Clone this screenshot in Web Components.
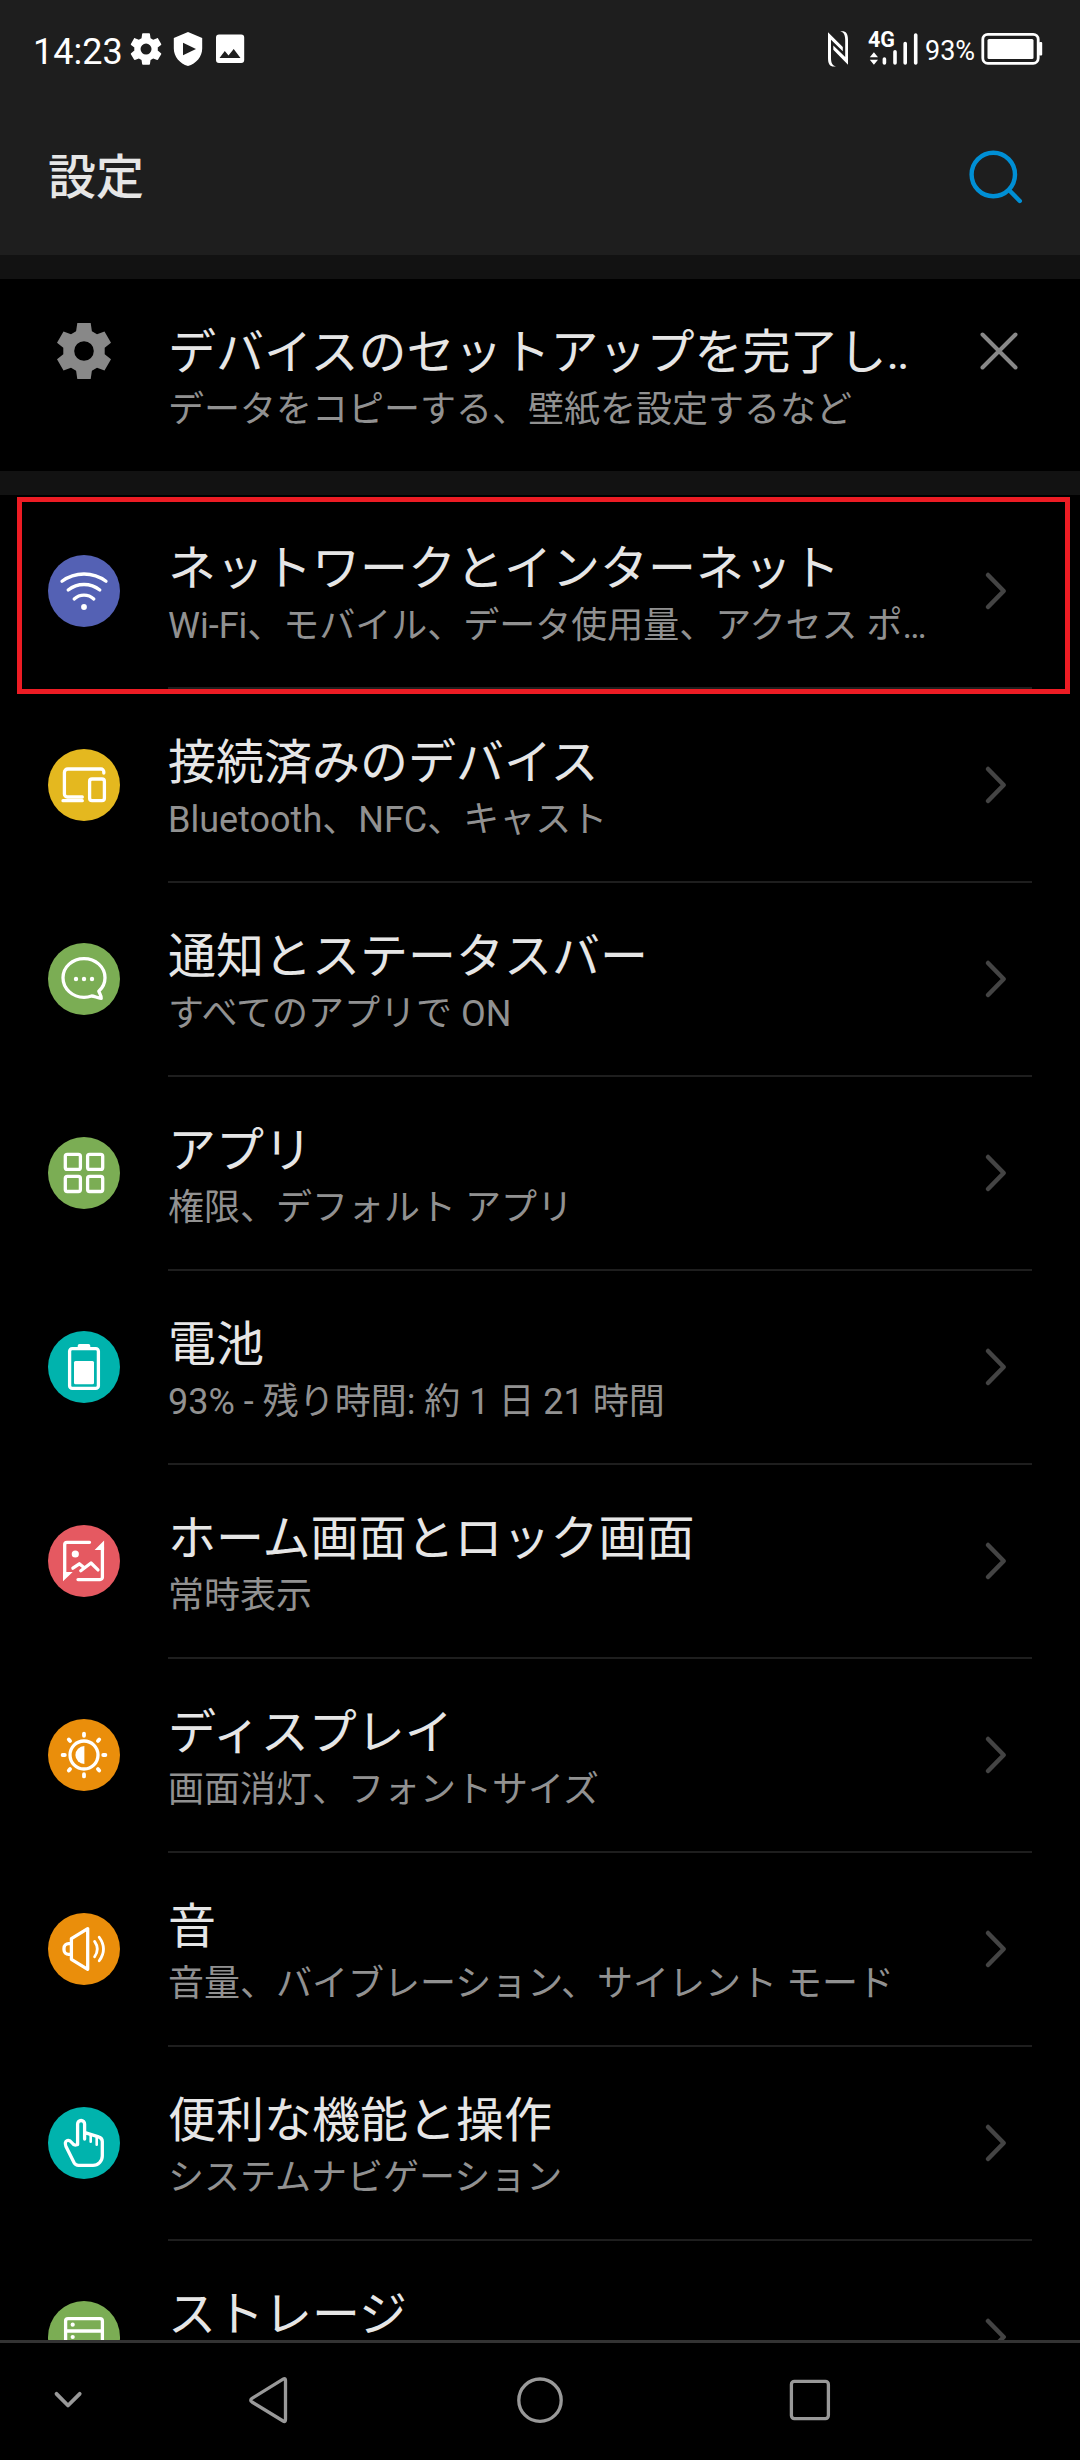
<!DOCTYPE html>
<html lang="ja">
<head>
<meta charset="utf-8">
<title>設定</title>
<style>
  body {
    margin: 0;
    background: #000;
    font-family: Roboto, "Noto Sans CJK JP", sans-serif;
  }
</style>
</head>
<body>
<settings-app>
  <status-bar slot="top" time="14:23" battery="93%"></status-bar>
  <app-header slot="top">設定</app-header>

  <setup-card slot="card">
    デバイスのセットアップを完了し<span class="dots">..</span>
    <span slot="summary">データをコピーする、壁紙を設定するなど</span>
  </setup-card>

  <settings-item icon="wifi" color="#5461b4" highlighted>
    ネットワークとインターネット
    <span slot="summary">Wi-Fi、モバイル、データ使用量、アクセス ポ…</span>
  </settings-item>
  <settings-item icon="devices" color="#e4b81f">
    接続済みのデバイス
    <span slot="summary">Bluetooth、NFC、キャスト</span>
  </settings-item>
  <settings-item icon="chat" color="#7bad54">
    通知とステータスバー
    <span slot="summary">すべてのアプリで ON</span>
  </settings-item>
  <settings-item icon="apps" color="#7bad54">
    アプリ
    <span slot="summary">権限、デフォルト アプリ</span>
  </settings-item>
  <settings-item icon="battery" color="#00b3ad">
    電池
    <span slot="summary">93% - 残り時間: 約 1 日 21 時間</span>
  </settings-item>
  <settings-item icon="wallpaper" color="#e55961">
    ホーム画面とロック画面
    <span slot="summary">常時表示</span>
  </settings-item>
  <settings-item icon="display" color="#ea8e0b">
    ディスプレイ
    <span slot="summary">画面消灯、フォントサイズ</span>
  </settings-item>
  <settings-item icon="sound" color="#ea8e0b">
    音
    <span slot="summary">音量、バイブレーション、サイレント モード</span>
  </settings-item>
  <settings-item icon="touch" color="#00b3ad">
    便利な機能と操作
    <span slot="summary">システムナビゲーション</span>
  </settings-item>
  <settings-item icon="storage" color="#7bad54">ストレージ</settings-item>

  <nav-bar slot="bottom"></nav-bar>
</settings-app>

<script>
/*
 * Icons for the list items, drawn on a 72x72 disc.
 */
const icons = {
  wifi: `
    <path d="M14 26.3a36.8 36.8 0 0 1 44 0M20.2 35a25.4 25.4 0 0 1 31.6 0M26.2 44a14.5 14.5 0 0 1 19.6 0"/>
    <circle class="solid" cx="36" cy="52" r="2.9"/>`,
  devices: `
    <path d="M55.8 24v-1.2a2.8 2.8 0 0 0-2.8-2.8H19.8a3.4 3.4 0 0 0-3.4 3.4V45a3 3 0 0 0 3 3H34.3M15 51.7H34.3"/>
    <rect x="41.6" y="30" width="14.8" height="21.7" rx="2.4"/>`,
  chat: `
    <path d="M50.8 48.3C54.7 44.800 57 40 57 34.800C57 24 47.600 15.600 36 15.600S15 24 15 34.800S24.400 54.300 36 54.300C38.700 54.300 41.300 53.800 43.600 53C46.500 53.200 49.500 55 53.200 55.300C53.300 52.500 51.800 50.700 50.800 48.300Z"/>
    <circle class="solid" cx="28" cy="36" r="2.2"/>
    <circle class="solid" cx="36" cy="36" r="2.2"/>
    <circle class="solid" cx="44" cy="36" r="2.2"/>`,
  apps: `
    <rect x="17.3" y="17.3" width="15.1" height="15.1" rx="2"/>
    <rect x="39.6" y="17.3" width="15.1" height="15.1" rx="2"/>
    <rect x="17.3" y="39.4" width="15.1" height="15.1" rx="2"/>
    <rect x="39.6" y="39.4" width="15.1" height="15.1" rx="2"/>`,
  battery: `
    <rect x="21.6" y="17.6" width="28.8" height="39.8" rx="2.6"/>
    <path class="solid" d="M29.7 17v-2.2a1.8 1.8 0 0 1 1.8-1.8h9a1.8 1.8 0 0 1 1.8 1.8V17z"/>
    <rect class="solid" x="26" y="30" width="20" height="23.3" rx="1.5"/>`,
  wallpaper: `
    <path d="M41.5 17.3H19a2.3 2.3 0 0 0-2.3 2.3V50M54.4 22V52.3a2.3 2.3 0 0 1-2.3 2.3H30"/>
    <path d="M24.9 43.2l6.4-4.4 4.3 3.4M32.8 45.7l10.2-7.7 7 6.9"/>
    <path class="solid" d="M15 56.2V47h9.7zM56.1 15.6V25h-9.5z"/>
    <circle class="solid" cx="27.3" cy="29" r="3.6"/>`,
  display: `
    <circle cx="36" cy="36" r="14"/>
    <path class="solid" d="M36.4 27v18a9 9 0 0 1 0-18z"/>
    <path style="stroke-width: 3.8" d="M36 14.6v2.2M36 55.2v2.2M14.6 36h2.2M55.2 36h2.2M20.8 20.4l1.3 1.5M51.2 20.4l-1.3 1.5M20.8 51.6l1.3-1.5M51.2 51.6l-1.3-1.5"/>`,
  sound: `
    <path d="M39.7 15.7V56.3L23.4 46.3V25.7z"/>
    <path d="M23 30.6h-2.4a4.6 4.6 0 0 0-4.6 4.6v1.6a4.6 4.6 0 0 0 4.6 4.6H23"/>
    <path style="stroke-width: 2.8" d="M46.6 28.4q5.4 7.6 0 15.4M51.2 24.2q8.6 11.8 0 23.6"/>`,
  touch: `
    <path d="M29.6 37.5V17a3.5 3.5 0 0 1 7 0V32M37 25.7l13.6 4.1a5 5 0 0 1 3.7 4.8V49a9.3 9.3 0 0 1-9.3 9.3H30.5a5 5 0 0 1-4.4-2.6L18 39.5C16.8 36.6 17.2 34.2 19.3 33.5C21 32.9 22.5 33.8 23.8 35.6C25.3 37.8 26.5 38.7 28.6 37.8"/>
    <path style="stroke-width: 2.6" d="M42.7 28.5v6.3M48.7 30.5v7.3"/>`,
  storage: `
    <rect x="17.6" y="17.6" width="36.8" height="37" rx="2.4"/>
    <path d="M18 30h36M18 42.5h36"/>
    <circle class="solid" cx="24.7" cy="23.7" r="2.1"/>
    <circle class="solid" cx="24.7" cy="36" r="2.1"/>
    <circle class="solid" cx="24.7" cy="48.5" r="2.1"/>`
}

/*
 * Title and summary are set the same way in the card and in the list items.
 */
const textStyle = `
  .text {
    flex: 1;
    min-width: 0;
    padding-top: 46px;
    white-space: nowrap;
  }
  .title {
    height: 61px;
    font-size: 48px;
    line-height: 56px;
    color: #e6e6e6;
  }
  .summary {
    font-size: 36px;
    line-height: 48px;
    color: #919191;
  }
  ::slotted(.dots) {
    letter-spacing: -2.3px;
  }
`

/**
 * Attaches an open shadow root with the given markup.
 *
 * @param {HTMLElement} element - The host.
 * @param {string} html - Content of the shadow root.
 */
function render (element, html) {
  const template = document.createElement('template')
  template.innerHTML = html
  element.attachShadow({ mode: 'open' }).append(template.content.cloneNode(true))
}

customElements.define('settings-app',
  /**
   * Represents the whole screen.
   */
  class extends HTMLElement {
    constructor () {
      super()
      render(this, `
        <style>
          :host {
            display: flex;
            flex-direction: column;
            width: 1080px;
            height: 2460px;
            overflow: hidden;
            background: #000;
          }
          header {
            flex: none;
            height: 255px;
            background: #1e1e1e;
          }
          .card {
            flex: none;
            border: solid #121212;
            border-width: 24px 0;
          }
          main {
            flex: 1;
            min-height: 0;
            overflow: hidden;
          }
        </style>
        <header><slot name="top"></slot></header>
        <div class="card"><slot name="card"></slot></div>
        <main><slot></slot></main>
        <slot name="bottom"></slot>
      `)
    }
  }
)

customElements.define('status-bar',
  /**
   * Represents the status bar with clock, notifications and signal.
   */
  class extends HTMLElement {
    constructor () {
      super()
      render(this, `
        <style>
          :host {
            display: flex;
            justify-content: space-between;
            box-sizing: border-box;
            height: 98px;
            padding: 0 37px 0 33px;
            color: #fff;
          }
          div {
            display: flex;
            align-items: center;
          }
          svg {
            display: block;
            fill: currentColor;
          }
          #time {
            width: 95px;
            padding-top: 5px;
            font-size: 36px;
            line-height: 42px;
          }
          #battery {
            width: 56px;
            padding-top: 4px;
            font-size: 27px;
            line-height: 32px;
          }
        </style>
        <div>
          <span id="time"></span>
          <svg width="120" height="40" viewBox="128 29 120 40">
            <path fill-rule="evenodd" transform="translate(127.2 30.2) scale(1.57)" d="M19.43 12.98c.04-.32.07-.64.07-.98s-.03-.66-.07-.98l2.11-1.65c.19-.15.24-.42.12-.64l-2-3.46c-.12-.22-.39-.3-.61-.22l-2.49 1c-.52-.4-1.08-.73-1.69-.98l-.38-2.65C14.46 2.18 14.25 2 14 2h-4c-.25 0-.46.18-.49.42l-.38 2.65c-.61.25-1.17.59-1.69.98l-2.49-1c-.23-.09-.49 0-.61.22l-2 3.46c-.13.22-.07.49.12.64l2.11 1.65c-.04.32-.07.65-.07.98s.03.66.07.98l-2.11 1.65c-.19.15-.24.42-.12.64l2 3.46c.12.22.39.3.61.22l2.49-1c.52.4 1.08.73 1.69.98l.38 2.65c.03.24.24.42.49.42h4c.25 0 .46-.18.49-.42l.38-2.65c.61-.25 1.17-.59 1.69-.98l2.49 1c.23.09.49 0 .61-.22l2-3.46c.12-.22.07-.49-.12-.64zM12 15.5a3.5 3.5 0 1 1 0-7 3.5 3.5 0 0 1 0 7z"/>
            <path fill-rule="evenodd" d="M188 32l14.2 6v10.5c0 8-6 15.2-14.2 17.5-8.2-2.3-14.2-9.5-14.2-17.5V38zM183 42.7V55.3L196 49z"/>
            <path fill-rule="evenodd" d="M219 34.5h22.200a3 3 0 0 1 3 3V60a3 3 0 0 1-3 3H219a3 3 0 0 1-3-3V37.5a3 3 0 0 1 3-3zM219.5 58H240.5L233.7 49l-5.2 6.6-3.7-4.5z"/>
          </svg>
        </div>
        <div>
          <svg width="98" height="56" viewBox="827 21 98 56">
            <path d="M828 32.3L842.8 47V51.3L831 39.8V58C831 63 832.5 65.8 836 66.4C830.5 67.3 828 65 828 58zM848 64.8L833.3 49.8V45.6L845.2 57V40C845.2 35 843.7 32 840.2 31.5C845.5 30.7 848 33 848 40z"/>
            <text x="868" y="47.3" font-size="21.5" font-weight="700">4G</text>
            <path d="M873.9 52.2l4.1 5h-8.2zM873.9 64.8l4.1-5h-8.2z"/>
            <path fill="none" stroke="currentColor" stroke-width="3.6" stroke-linecap="round" d="M884.4 59v4M895 51.7V63M905.2 43.5V63M915.7 35V63"/>
          </svg>
          <span id="battery"></span>
          <svg width="62" height="40" viewBox="981 29 62 40">
            <rect x="982.8" y="34.3" width="55.4" height="29" rx="5" fill="none" stroke="currentColor" stroke-width="2.8"/>
            <rect x="987.5" y="39" width="46" height="20" rx="1.5"/>
            <rect x="1039" y="42" width="3.2" height="13.5" rx="1"/>
          </svg>
        </div>
      `)
      this.shadowRoot.querySelector('#time').textContent = this.getAttribute('time')
      this.shadowRoot.querySelector('#battery').textContent = this.getAttribute('battery')
    }
  }
)

customElements.define('app-header',
  /**
   * Represents the title row with the search button.
   */
  class extends HTMLElement {
    constructor () {
      super()
      render(this, `
        <style>
          :host {
            display: flex;
            align-items: center;
            justify-content: space-between;
            box-sizing: border-box;
            height: 157px;
            padding: 0 54px 0 48px;
          }
          h1 {
            margin: 0;
            padding-top: 2px;
            font-size: 48px;
            font-weight: 500;
            line-height: 60px;
            color: #e6e6e6;
          }
          svg {
            display: block;
          }
        </style>
        <h1><slot></slot></h1>
        <svg width="60" height="60" viewBox="0 0 60 60" fill="none" stroke="#008fd5" stroke-width="4.4" stroke-linecap="round">
          <circle cx="27.3" cy="27.5" r="21.7"/>
          <path d="M43.5 43.5L53.8 54"/>
        </svg>
      `)
    }
  }
)

customElements.define('setup-card',
  /**
   * Represents the dismissible card above the list.
   */
  class extends HTMLElement {
    constructor () {
      super()
      render(this, `
        <style>
          ${textStyle}
          :host {
            display: flex;
            box-sizing: border-box;
            height: 192px;
            padding: 0 57px 0 48px;
          }
          svg {
            flex: none;
            margin-top: 36px;
          }
          .gear {
            margin-right: 48px;
          }
        </style>
        <svg class="gear" width="72" height="72" viewBox="-36 -36 72 72" fill="#888">
          <path fill-rule="evenodd" d="M-6.7-28H6.7L7.9-19.7 13-16.8 20.5-19.6 27-8.3 20.7-3.3V3.3L27 8.3 20.5 19.6 13 16.8 7.9 19.7 6.7 28H-6.7L-7.9 19.7-13 16.8-20.5 19.6-27 8.3-20.7 3.3V-3.3L-27-8.3-20.5-19.6-13-16.8-7.9-19.7zM0-9.8a9.8 9.8 0 1 0 0 19.6a9.8 9.8 0 1 0 0-19.6z"/>
        </svg>
        <div class="text">
          <div class="title"><slot></slot></div>
          <div class="summary"><slot name="summary"></slot></div>
        </div>
        <svg width="48" height="72" viewBox="-24 -36 48 72" stroke="#888" stroke-width="4" stroke-linecap="round">
          <path d="M-16.5-16.5L16.5 16.5M16.5-16.5L-16.5 16.5"/>
        </svg>
      `)
    }
  }
)

customElements.define('settings-item',
  /**
   * Represents one entry of the settings list.
   */
  class extends HTMLElement {
    constructor () {
      super()
      render(this, `
        <style>
          ${textStyle}
          :host {
            display: flex;
            position: relative;
            height: 194px;
            padding: 0 48px;
          }
          .icon {
            flex: none;
            width: 72px;
            height: 72px;
            margin: 60px 48px 0 0;
            border-radius: 50%;
            fill: none;
            stroke: #fff;
            stroke-width: 3.3;
            stroke-linecap: round;
            stroke-linejoin: round;
          }
          .icon .solid {
            fill: #fff;
            stroke: none;
          }
          .body {
            flex: 1;
            min-width: 0;
            display: flex;
            box-sizing: border-box;
            border-bottom: 2px solid #1e1e1e;
          }
          .chevron {
            flex: none;
            margin: 72px 22px 0 0;
          }
          :host([highlighted])::after {
            content: "";
            position: absolute;
            left: 17px;
            right: 10px;
            top: 2px;
            height: 187px;
            border: 5px solid #ed1c24;
          }
        </style>
        <svg class="icon" viewBox="0 0 72 72">${icons[this.getAttribute('icon')]}</svg>
        <div class="body">
          <div class="text">
            <div class="title"><slot></slot></div>
            <div class="summary"><slot name="summary"></slot></div>
          </div>
          <svg class="chevron" width="28" height="48" viewBox="0 0 28 48" fill="none" stroke="#444" stroke-width="4.5" stroke-linecap="round" stroke-linejoin="round">
            <path d="M6 8L21.7 24 6 40"/>
          </svg>
        </div>
      `)
      this.shadowRoot.querySelector('.icon').style.background = this.getAttribute('color')
    }
  }
)

customElements.define('nav-bar',
  /**
   * Represents the system navigation buttons.
   */
  class extends HTMLElement {
    constructor () {
      super()
      render(this, `
        <style>
          :host {
            flex: none;
            display: grid;
            grid-template-columns: 135px 270px 270px 270px;
            place-items: center;
            box-sizing: border-box;
            height: 120px;
            border-top: 3px solid #333;
            padding-bottom: 1px;
          }
          svg {
            width: 60px;
            height: 60px;
            fill: none;
            stroke: #999;
            stroke-width: 3.3;
            stroke-linecap: round;
            stroke-linejoin: round;
          }
        </style>
        <svg viewBox="0 0 60 60"><path style="stroke-width: 3.8" d="M18.500 22.800L30 34.500 41.700 22.800"/></svg>
        <svg viewBox="0 0 60 60"><path d="M43.1 8.2C45 7 45.5 8 45.5 9.5V48.500C45.5 50 45 51.2 43.1 50L12 31C10.3 29.8 10.3 28.5 12 27.3z"/></svg>
        <svg viewBox="0 0 60 60"><circle cx="30" cy="29.2" r="21.2"/></svg>
        <svg viewBox="0 0 60 60"><rect x="11.4" y="10.4" width="37" height="37.2" rx="3"/></svg>
      `)
    }
  }
)
</script>
</body>
</html>
